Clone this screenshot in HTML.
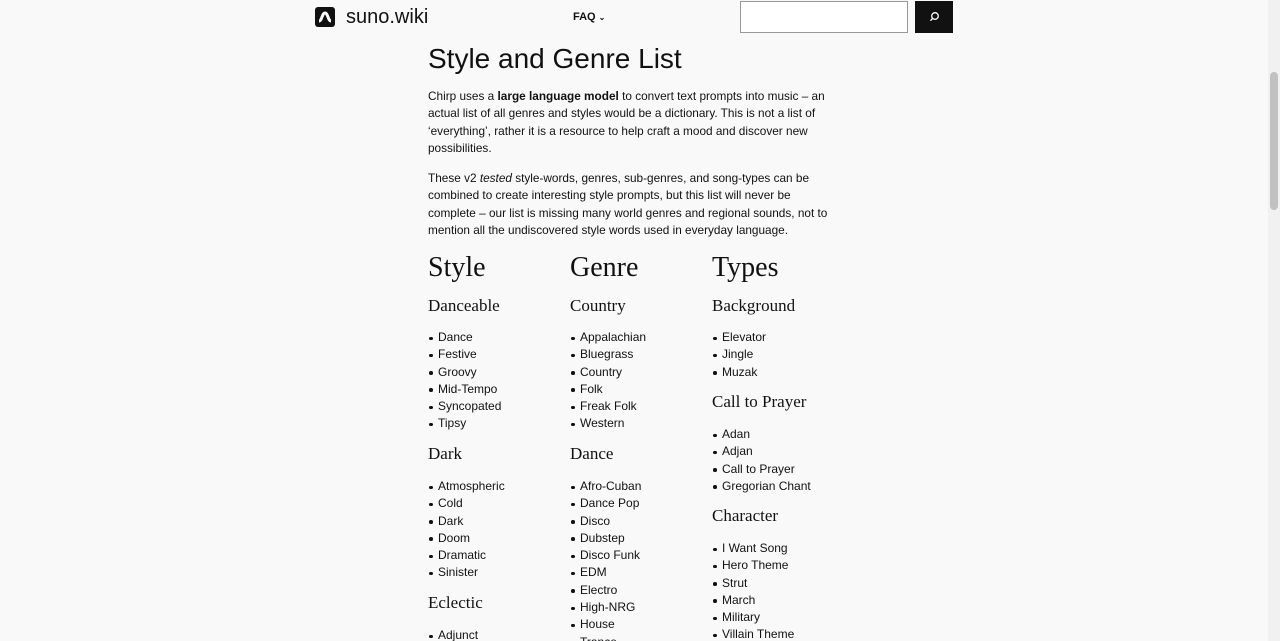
<!DOCTYPE html>
<html><head><meta charset="utf-8"><style>
*{margin:0;padding:0;box-sizing:border-box}
html{overflow:hidden;height:641px}
body{width:1280px;height:641px;overflow:hidden;background:#f9f9f9;font-family:"Liberation Sans",sans-serif;color:#111;position:relative}
.a{position:absolute;white-space:nowrap}
.p{font-size:11.8px;line-height:17.3px;left:428px}
.h1{font-family:"Liberation Serif",serif;font-size:28px;line-height:34px}
.h2{font-family:"Liberation Serif",serif;font-size:17px;line-height:22px}
ul{position:absolute;list-style:none;font-size:12px;line-height:17.3px;white-space:nowrap}
li{position:relative}
li:before{content:"";position:absolute;left:-9px;top:7.5px;width:3.5px;height:3.5px;border-radius:50%;background:#111}
.sb{position:absolute;right:0;top:0;width:12px;height:641px;background:#f1f1f1}
.sb div{position:absolute;left:2px;top:72px;width:8px;height:138px;background:#c1c1c1;border-radius:4px}
</style></head><body>
<div class="sb"><div></div></div>
<svg class="a" style="left:315px;top:7px" width="20" height="20" viewBox="0 0 20 20"><rect width="20" height="20" rx="3" fill="#111"/><path d="M4 14c3 0 3-8 6-8s3 8 6 8" stroke="#fff" stroke-width="3" fill="none"/></svg>
<div class="a" style="left:346px;top:5px;font-size:20px;line-height:24px;font-weight:500">suno.wiki</div>
<div class="a" style="left:573px;top:10px;font-size:11px;line-height:14px;font-weight:bold">FAQ <span style="font-size:8px">⌄</span></div>
<div class="a" style="left:740px;top:1px;width:168px;height:32px;border:1px solid #999;background:#fff"></div>
<div class="a" style="left:915px;top:1px;width:38px;height:32px;background:#111"><svg width="38" height="32"><circle cx="20" cy="15" r="3.3" stroke="#fff" stroke-width="1.3" fill="none"/><path d="M17.6 17.5l-2.2 2.2" stroke="#fff" stroke-width="1.3"/></svg></div>
<div class="a" style="left:428px;top:42px;font-size:28px;line-height:34px">Style and Genre List</div>
<div class="a p" style="top:88px">Chirp uses a <b>large language model</b> to convert text prompts into music – an<br>actual list of all genres and styles would be a dictionary. This is not a list of<br>‘everything’, rather it is a resource to help craft a mood and discover new<br>possibilities.</div>
<div class="a p" style="top:170px">These v2 <i>tested</i> style-words, genres, sub-genres, and song-types can be<br>combined to create interesting style prompts, but this list will never be<br>complete – our list is missing many world genres and regional sounds, not to<br>mention all the undiscovered style words used in everyday language.</div>

<div class="a h1" style="left:428px;top:251px">Style</div>
<div class="a h1" style="left:570px;top:251px">Genre</div>
<div class="a h1" style="left:712px;top:251px">Types</div>

<div class="a h2" style="left:428px;top:295px">Danceable</div>
<div class="a h2" style="left:570px;top:295px">Country</div>
<div class="a h2" style="left:712px;top:295px">Background</div>
<div class="a h2" style="left:428px;top:443px">Dark</div>
<div class="a h2" style="left:570px;top:443px">Dance</div>
<div class="a h2" style="left:712px;top:391px">Call to Prayer</div>
<div class="a h2" style="left:428px;top:592px">Eclectic</div>
<div class="a h2" style="left:712px;top:505px">Character</div>

<ul style="left:438px;top:329px"><li>Dance</li><li>Festive</li><li>Groovy</li><li>Mid-Tempo</li><li>Syncopated</li><li>Tipsy</li></ul>
<ul style="left:438px;top:478px"><li>Atmospheric</li><li>Cold</li><li>Dark</li><li>Doom</li><li>Dramatic</li><li>Sinister</li></ul>
<ul style="left:438px;top:627px"><li>Adjunct</li></ul>
<ul style="left:580px;top:329px"><li>Appalachian</li><li>Bluegrass</li><li>Country</li><li>Folk</li><li>Freak Folk</li><li>Western</li></ul>
<ul style="left:580px;top:478px"><li>Afro-Cuban</li><li>Dance Pop</li><li>Disco</li><li>Dubstep</li><li>Disco Funk</li><li>EDM</li><li>Electro</li><li>High-NRG</li><li>House</li><li>Trance</li></ul>
<ul style="left:722px;top:329px"><li>Elevator</li><li>Jingle</li><li>Muzak</li></ul>
<ul style="left:722px;top:426px"><li>Adan</li><li>Adjan</li><li>Call to Prayer</li><li>Gregorian Chant</li></ul>
<ul style="left:722px;top:540px"><li>I Want Song</li><li>Hero Theme</li><li>Strut</li><li>March</li><li>Military</li><li>Villain Theme</li></ul>
</body></html>
